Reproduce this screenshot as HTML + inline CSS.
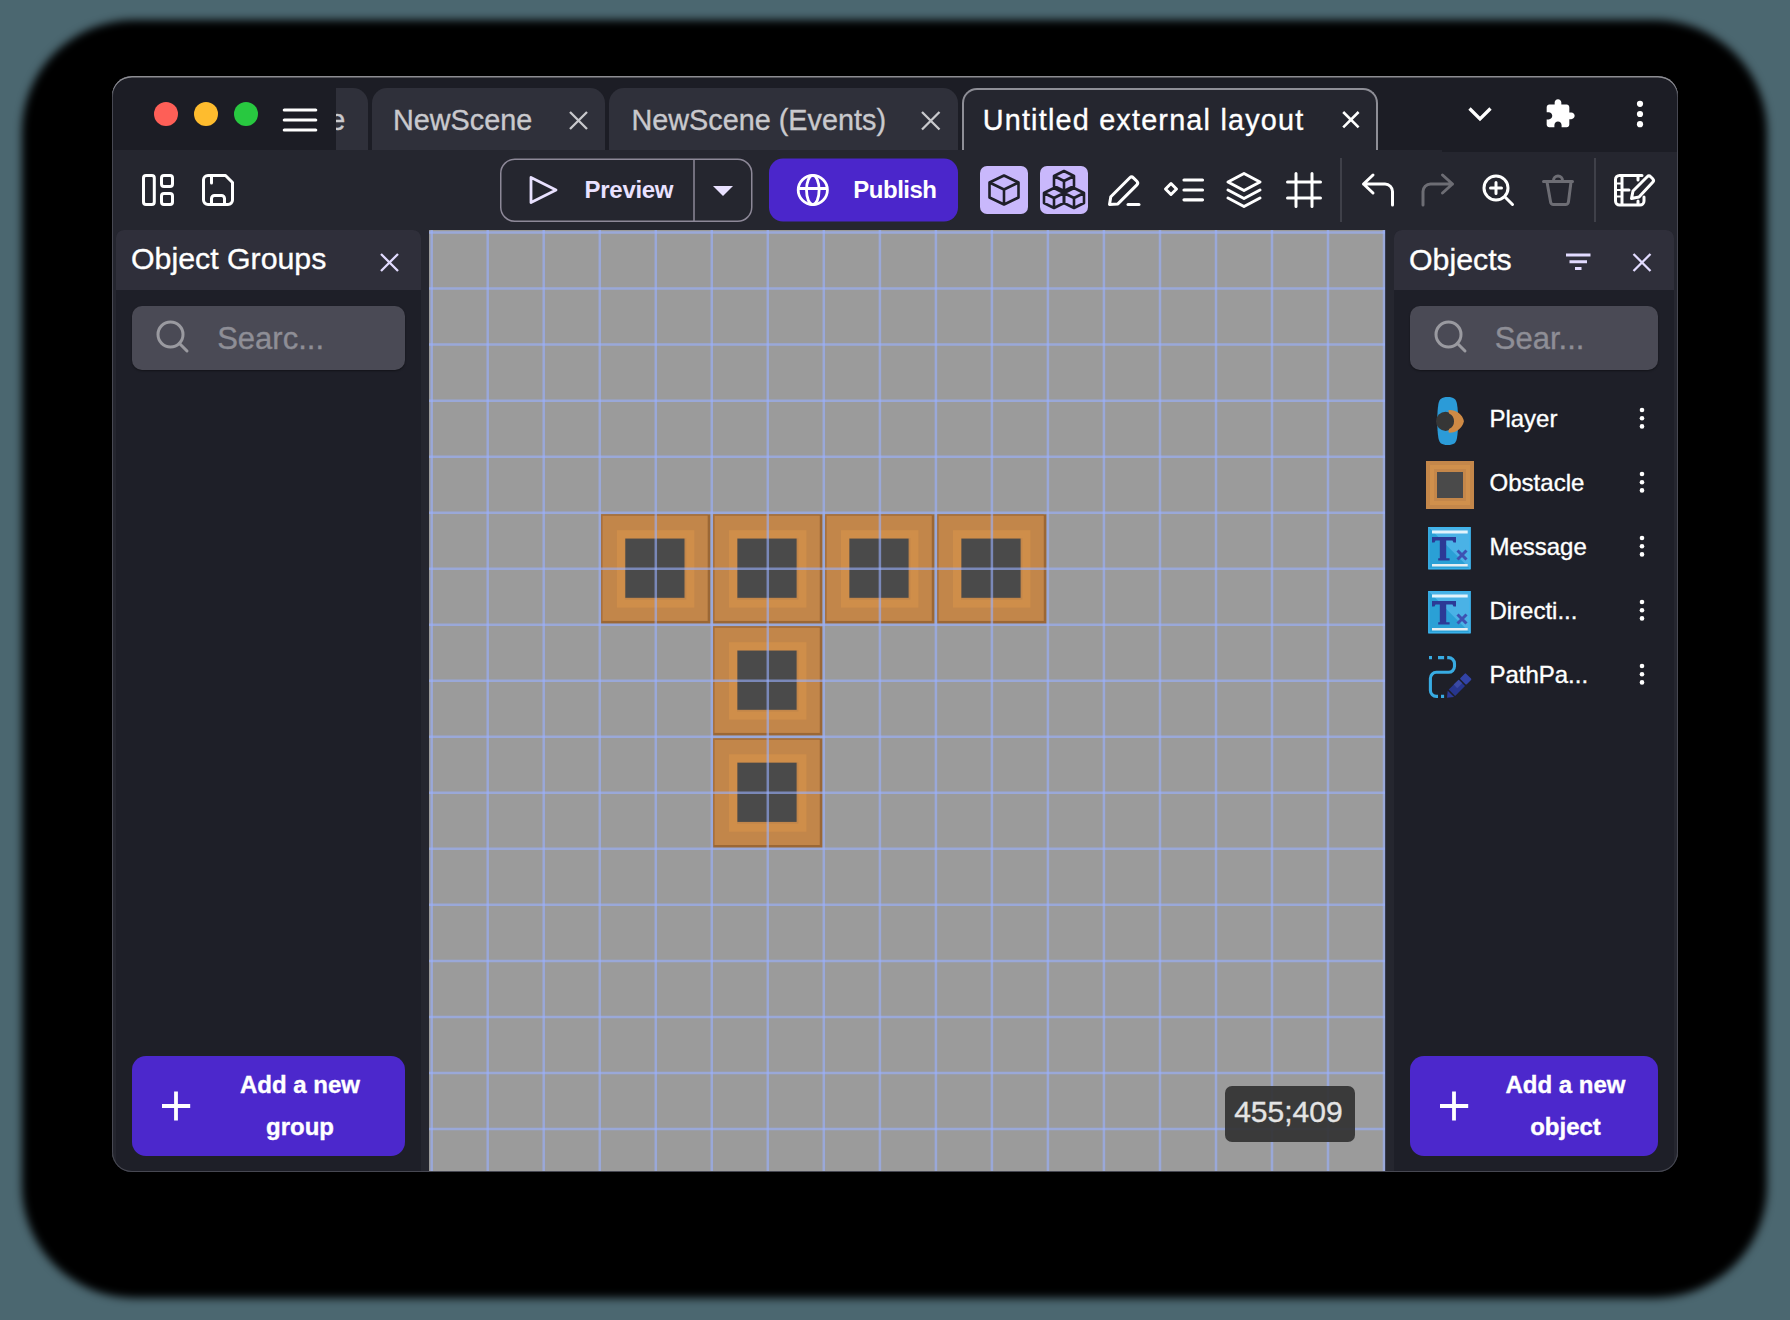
<!DOCTYPE html>
<html><head><meta charset="utf-8">
<style>
*{box-sizing:border-box;margin:0;padding:0}
html,body{width:1790px;height:1320px;overflow:hidden;background:#4b6770;font-family:"Liberation Sans",sans-serif}
.a{position:absolute}
#shadow{left:22px;top:20px;width:1745px;height:1278px;border-radius:112px;background:#000;filter:blur(4.5px)}
#win{left:112px;top:76px;width:1566px;height:1096px;border-radius:20px;background:#25262f;overflow:hidden}
#in{left:-112px;top:-76px;width:1790px;height:1320px}
#wb{left:112px;top:76px;width:1566px;height:1096px;border-radius:20px;box-shadow:inset 0 1.5px 0 #8d8d92, inset 0 0 0 1px #474852;pointer-events:none}
.t{position:absolute;white-space:nowrap;line-height:1;-webkit-text-stroke:0.35px currentColor}
svg{position:absolute;left:0;top:0;overflow:visible}
</style></head><body>
<div id="shadow" class="a"></div>
<div id="win" class="a"><div id="in" class="a">
  <!-- title/tab row -->
  <div class="a" style="left:112px;top:76px;width:1566px;height:76px;background:#1c1d25"></div>
  <!-- inactive tabs -->
  <div class="a" style="left:300px;top:88px;width:68px;height:62px;background:#2f303a;border-radius:0 15px 0 0;overflow:hidden"><div class="t" style="left:-94px;top:17.8px;font-size:28.8px;color:#c9c9cd">NewScene</div></div>
  <div class="a" style="left:112px;top:76px;width:224px;height:74px;background:#1c1d25"></div>
  <div class="a" style="left:372px;top:88px;width:233px;height:62px;background:#2f303a;border-radius:15px 15px 0 0"></div>
  <div class="a" style="left:609px;top:88px;width:349px;height:62px;background:#2f303a;border-radius:15px 15px 0 0"></div>
  <div class="a" style="left:962px;top:88px;width:416px;height:70px;background:#25262f;border-radius:15px 15px 0 0;border:2px solid #8e8e96;border-bottom:none"></div>
  <!-- toolbar -->
  <div class="a" style="left:112px;top:150px;width:1330px;height:80px;background:#25262f"></div><div class="a" style="left:1442px;top:152px;width:236px;height:78px;background:#25262f"></div>

  <div class="t" style="left:393px;top:105.8px;font-size:28.8px;color:#c9c9cd">NewScene</div>
  <div class="t" style="left:631.5px;top:105.8px;font-size:28.8px;color:#c9c9cd">NewScene (Events)</div>
  <div class="t" style="left:982.7px;top:105.8px;font-size:28.8px;color:#ffffff;letter-spacing:1.2px">Untitled external layout</div>

  <svg width="1790" height="1320">
    <!-- traffic lights -->
    <circle cx="166" cy="114" r="12" fill="#fe5f57"/>
    <circle cx="206" cy="114" r="12" fill="#febc2e"/>
    <circle cx="246" cy="114" r="12" fill="#28c840"/>
    <!-- hamburger -->
    <g stroke="#fff" stroke-width="3.2" stroke-linecap="round">
      <line x1="284.3" y1="110" x2="315.7" y2="110"/><line x1="284.3" y1="120" x2="315.7" y2="120"/><line x1="284.3" y1="130" x2="315.7" y2="130"/>
    </g>
    <!-- tab close x -->
    <g stroke="#c9c9cd" stroke-width="2.3" stroke-linecap="butt">
      <path d="M570 112 L587 129 M587 112 L570 129"/>
      <path d="M922 112 L939.5 129.5 M939.5 112 L922 129.5"/>
    </g>
    <path d="M1343.2 112 L1358.6 127.4 M1358.6 112 L1343.2 127.4" stroke="#fff" stroke-width="2.6"/>
    <!-- chevron -->
    <path d="M1469.5 108.5 L1480 119 L1490.5 108.5" fill="none" stroke="#fff" stroke-width="3.3" stroke-linecap="butt" stroke-linejoin="miter"/>
    <!-- puzzle -->
    <path transform="translate(1544,97.8) scale(1.333)" fill="#fff" d="M20.5 11H19V7c0-1.1-.9-2-2-2h-4V3.5C13 2.12 11.88 1 10.5 1S8 2.12 8 3.5V5H4c-1.1 0-1.99.9-1.99 2v3.8H3.5c1.49 0 2.7 1.21 2.7 2.7s-1.21 2.7-2.7 2.7H2V20c0 1.1.9 2 2 2h3.8v-1.5c0-1.49 1.21-2.7 2.7-2.7 1.49 0 2.7 1.21 2.7 2.7V22H17c1.1 0 2-.9 2-2v-4h1.5c1.38 0 2.5-1.12 2.5-2.5S21.88 11 20.5 11z"/>
    <!-- kebab top -->
    <g fill="#fff"><circle cx="1640" cy="103.8" r="3.1"/><circle cx="1640" cy="114" r="3.1"/><circle cx="1640" cy="124.2" r="3.1"/></g>

    <!-- toolbar icons -->
    <g fill="none" stroke="#fff" stroke-width="3" stroke-linecap="round" stroke-linejoin="round">
      <rect x="143.5" y="175.5" width="10.8" height="29" rx="2.5"/>
      <rect x="161.5" y="175.5" width="11" height="11" rx="2.5"/>
      <rect x="161.5" y="193.5" width="11" height="11" rx="2.5"/>
      <path d="M208 175.5 H225.5 L232.5 182.5 V200 a4.5 4.5 0 0 1 -4.5 4.5 H208 a4.5 4.5 0 0 1 -4.5 -4.5 V180 a4.5 4.5 0 0 1 4.5 -4.5 Z"/>
      <path d="M211.5 175.5 V183"/>
      <path d="M211.5 204.5 V198.5 a3 3 0 0 1 3 -3 H221.5 a3 3 0 0 1 3 3 V204.5"/>
    </g>
    <!-- preview button -->
    <rect x="500.75" y="159.25" width="251" height="62" rx="14" fill="none" stroke="#8d8898" stroke-width="1.5"/>
    <line x1="694" y1="159" x2="694" y2="221.5" stroke="#8d8898" stroke-width="1.5"/>
    <path d="M531 177.5 L556 190 L531 202.5 Z" fill="none" stroke="#e9e1ff" stroke-width="2.8" stroke-linejoin="round"/>
    <path d="M713 186 H733 L723 196 Z" fill="#e9e1ff"/>
    <!-- publish -->
    <rect x="769" y="158.6" width="189" height="63" rx="14" fill="#4b26cb"/>
    <g fill="none" stroke="#fff" stroke-width="2.8">
      <circle cx="812.8" cy="190" r="14.6"/>
      <ellipse cx="812.8" cy="190" rx="6.3" ry="14.6"/>
      <line x1="798.2" y1="188.5" x2="827.4" y2="188.5"/>
    </g>
    <!-- selected view buttons -->
    <rect x="980" y="166" width="48" height="48" rx="7" fill="#c9b8fc"/>
    <rect x="1040" y="166" width="48" height="48" rx="7" fill="#c9b8fc"/>
    <g fill="none" stroke="#1f1f29" stroke-width="2.6" stroke-linejoin="round">
      <path d="M1004 175.5 L1018.5 182.5 V197.5 L1004 204.5 L989.5 197.5 V182.5 Z M989.5 182.5 L1004 189.5 L1018.5 182.5 M1004 189.5 V204.5"/>
      <path d="M1064 171 L1074 176 V186 L1064 191 L1054 186 V176 Z M1054 176 L1064 181 L1074 176 M1064 181 V191"/>
      <path d="M1054 188 L1064 193 V203 L1054 208 L1044 203 V193 Z M1044 193 L1054 198 L1064 193 M1054 198 V208"/>
      <path d="M1074 188 L1084 193 V203 L1074 208 L1064 203 V193 Z M1064 193 L1074 198 L1084 193 M1074 198 V208"/>
    </g>
    <g fill="none" stroke="#fff" stroke-width="3" stroke-linecap="round" stroke-linejoin="round">
      <path d="M1109.5 204.5 L1110.8 196.8 L1129.8 177.8 a2.6 2.6 0 0 1 3.6 0 L1136.9 181.3 a2.6 2.6 0 0 1 0 3.6 L1117.9 203.9 Z"/>
      <path d="M1128 204.5 H1139"/>
      <path d="M1171 183.5 L1176.5 189 L1171 194.5 L1165.5 189 Z"/>
      <path d="M1184 180 H1202.5 M1184 190 H1202.5 M1184 199.8 H1202.5" stroke-width="3.2"/>
      <path d="M1244 173.5 L1260 182 L1244 190.5 L1228 182 Z M1228 190 L1244 198.5 L1260 190 M1228 198 L1244 206.5 L1260 198"/>
      <path d="M1296 173.5 V206.5 M1312 173.5 V206.5 M1287.5 182 H1320.5 M1287.5 198 H1320.5"/>
      <path d="M1373 175 L1363.5 184 L1373 193 M1363.5 184 H1385 a7.5 7.5 0 0 1 7.5 7.5 V205"/>
      <circle cx="1496" cy="188" r="12"/>
      <path d="M1505 197 L1512.5 204.5 M1496 182.5 V193.5 M1490.5 188 H1501.5"/>
      <path d="M1642 175.5 H1619.5 a4 4 0 0 0 -4 4 V201 a4 4 0 0 0 4 4 H1640 a4 4 0 0 0 4 -4 V197 M1622 175.5 V205 M1622 190 H1629 M1638 175.5 V180 M1638 201 V205"/><path d="M1616 183.5 H1622 M1616 190 H1622 M1616 196.5 H1622" stroke-width="2"/><path d="M1631.5 198.5 L1633 191 L1647.2 176.8 a2.5 2.5 0 0 1 3.5 0 L1652.7 178.8 a2.5 2.5 0 0 1 0 3.5 L1639 197 Z"/>
    </g>
    <g fill="none" stroke="#6d6d74" stroke-width="3" stroke-linecap="round" stroke-linejoin="round">
      <path d="M1442.5 175 L1452.5 184 L1442.5 193 M1452.5 184 H1430.5 a7.5 7.5 0 0 0 -7.5 7.5 V205"/>
      <path d="M1543.5 181.5 H1572.5 M1547 182 L1550.5 201.5 a3 3 0 0 0 3 3 H1565.5 a3 3 0 0 0 3 -3 L1571 182 M1553.5 181 V180.4 a4.5 4.5 0 0 1 9 0 V181"/>
    </g>
    <line x1="1341" y1="158" x2="1341" y2="222" stroke="#3f4049" stroke-width="2"/>
    <line x1="1595" y1="158" x2="1595" y2="222" stroke="#3f4049" stroke-width="2"/>
  </svg>
  <div class="t" style="left:584.6px;top:178px;font-size:24px;font-weight:bold;color:#e9e1ff;letter-spacing:-0.3px;-webkit-text-stroke:0">Preview</div>
  <div class="t" style="left:853.3px;top:178px;font-size:24px;font-weight:bold;color:#fff;letter-spacing:-0.5px;-webkit-text-stroke:0">Publish</div>

  <!-- left panel -->
  <div class="a" style="left:116px;top:230px;width:305px;height:960px;background:#1e1f28;border-radius:8px"></div>
  <div class="a" style="left:116px;top:230px;width:305px;height:60px;background:#2f2f3a;border-radius:8px 8px 0 0"></div>
  <div class="t" style="left:131px;top:244px;font-size:30.3px;color:#fff">Object Groups</div>
  <div class="a" style="left:132px;top:306px;width:273px;height:64px;background:#4a4a55;border-radius:10px;box-shadow:0 1px 2px rgba(0,0,0,.4)"></div>
  <div class="t" style="left:217.2px;top:323.1px;font-size:31px;color:#8e8e96">Searc...</div>
  <div class="a" style="left:132px;top:1056px;width:273px;height:100px;background:#4c28cc;border-radius:14px"></div>
  <div class="t" style="left:132px;width:336px;text-align:center;top:1072.5px;font-size:24px;font-weight:bold;color:#fff">Add a new</div>
  <div class="t" style="left:132px;width:336px;text-align:center;top:1114.8px;font-size:24px;font-weight:bold;color:#fff">group</div>

  <!-- canvas -->
  <div class="a" style="left:429px;top:230px;width:956px;height:942px;background:#9b9b9b"></div>
  <svg width="1790" height="1320" id="cv"><defs><g id="ob"><rect x="0" y="0" width="109.2" height="109.2" fill="#9b6735"/><rect x="0" y="0" width="106.5" height="106.5" fill="#a8703c"/><rect x="1.5" y="1.5" width="105" height="105" fill="#c2864a"/><rect x="19.8" y="19.8" width="69.4" height="69.4" fill="none" stroke="#cf8e4a" stroke-width="8"/><rect x="24.2" y="24.2" width="59.2" height="59.2" fill="#4a4a4a"/></g></defs><use href="#ob" x="601.1" y="514.4"/><use href="#ob" x="713.2" y="514.4"/><use href="#ob" x="825.2" y="514.4"/><use href="#ob" x="937.2" y="514.4"/><use href="#ob" x="713.2" y="626.4"/><use href="#ob" x="713.2" y="738.5"/><path d="M431.7 230V1172M487.7 230V1172M543.7 230V1172M599.8 230V1172M655.8 230V1172M711.8 230V1172M767.8 230V1172M823.8 230V1172M879.9 230V1172M935.9 230V1172M991.9 230V1172M1047.9 230V1172M1103.9 230V1172M1160.0 230V1172M1216.0 230V1172M1272.0 230V1172M1328.0 230V1172M1384.0 230V1172" stroke="rgba(154,177,255,0.61)" stroke-width="2.5" fill="none"/><path d="M429 232.6H1385M429 288.6H1385M429 344.6H1385M429 400.7H1385M429 456.7H1385M429 512.7H1385M429 568.7H1385M429 624.7H1385M429 680.8H1385M429 736.8H1385M429 792.8H1385M429 848.8H1385M429 904.8H1385M429 960.9H1385M429 1016.9H1385M429 1072.9H1385M429 1128.9H1385" stroke="rgba(154,177,255,0.61)" stroke-width="2.5" fill="none"/></svg>
  <div class="a" style="left:1225px;top:1086px;width:130px;height:56px;background:rgba(50,50,50,0.92);border-radius:7px"></div>
  <div class="t" style="left:1234.2px;top:1096.5px;font-size:30px;color:#e4e4e4">455;409</div>

  <!-- right panel -->
  <div class="a" style="left:1394px;top:230px;width:280px;height:960px;background:#1e1f28;border-radius:8px"></div>
  <div class="a" style="left:1394px;top:230px;width:280px;height:60px;background:#2f2f3a;border-radius:8px 8px 0 0"></div>
  <div class="t" style="left:1409px;top:244.5px;font-size:30.3px;color:#fff">Objects</div>
  <div class="a" style="left:1410px;top:306px;width:248px;height:64px;background:#4a4a55;border-radius:10px;box-shadow:0 1px 2px rgba(0,0,0,.4)"></div>
  <div class="t" style="left:1494.8px;top:323.1px;font-size:31px;color:#8e8e96">Sear...</div>
  <div class="t" style="left:1489.4px;top:407px;font-size:24px;color:#fff">Player</div>
  <div class="t" style="left:1489.6px;top:471.1px;font-size:24px;color:#fff">Obstacle</div>
  <div class="t" style="left:1489.4px;top:535.1px;font-size:24px;color:#fff">Message</div>
  <div class="t" style="left:1489.4px;top:599.1px;font-size:24px;color:#fff">Directi...</div>
  <div class="t" style="left:1489.4px;top:663.1px;font-size:24px;color:#fff">PathPa...</div>
  <div class="a" style="left:1410px;top:1056px;width:248px;height:100px;background:#4c28cc;border-radius:14px"></div>
  <div class="t" style="left:1410px;width:311px;text-align:center;top:1072.5px;font-size:24px;font-weight:bold;color:#fff">Add a new</div>
  <div class="t" style="left:1410px;width:311px;text-align:center;top:1114.8px;font-size:24px;font-weight:bold;color:#fff">object</div>

  <svg width="1790" height="1320" id="sv2">
    <!-- panel icons -->
    <path d="M381 254 L398 271 M398 254 L381 271" stroke="#e2dbff" stroke-width="2.3"/>
    <path d="M1633.5 254 L1650.5 271 M1650.5 254 L1633.5 271" stroke="#e2dbff" stroke-width="2.3"/>
    <g stroke="#e2dbff" stroke-width="3"><path d="M1566 255 H1590.5 M1569.5 261.8 H1587 M1575 268.5 H1581.5"/></g>
    <g fill="none" stroke="#9a9aa0" stroke-width="3" stroke-linecap="round">
      <circle cx="170.5" cy="334.5" r="12.5"/><path d="M179.5 343.5 L187 351"/>
      <circle cx="1448.5" cy="334.5" r="12.5"/><path d="M1457.5 343.5 L1465 351"/>
    </g>
    <!-- plus icons -->
    <g stroke="#fff" stroke-width="3.8"><path d="M176 1091.5 V1120.5 M162 1106 H190.2"/><path d="M1454 1091.5 V1120.5 M1440 1106 H1468.2"/></g>
    <!-- kebabs -->
    <g fill="#fff">
      <circle cx="1642" cy="410" r="2.3"/><circle cx="1642" cy="418.2" r="2.3"/><circle cx="1642" cy="426.4" r="2.3"/>
      <circle cx="1642" cy="474" r="2.3"/><circle cx="1642" cy="482.2" r="2.3"/><circle cx="1642" cy="490.4" r="2.3"/>
      <circle cx="1642" cy="538" r="2.3"/><circle cx="1642" cy="546.2" r="2.3"/><circle cx="1642" cy="554.4" r="2.3"/>
      <circle cx="1642" cy="602" r="2.3"/><circle cx="1642" cy="610.2" r="2.3"/><circle cx="1642" cy="618.4" r="2.3"/>
      <circle cx="1642" cy="666" r="2.3"/><circle cx="1642" cy="674.2" r="2.3"/><circle cx="1642" cy="682.4" r="2.3"/>
    </g>
    <!-- player icon -->
    <path d="M1447.7 397 C1454 397 1456 399 1457 404 C1458.5 412 1458.5 430 1457 438 C1456 443 1454 445 1447.7 445 C1441.4 445 1439.4 443 1438.4 438 C1436.9 430 1436.9 412 1438.4 404 C1439.4 399 1441.4 397 1447.7 397 Z" fill="#2b9bd8"/>
    <circle cx="1445.6" cy="421.3" r="9.6" fill="#363636"/>
    <path d="M1449.5 411 C1456 411 1461.5 415.5 1462.8 421.3 C1461.5 427.1 1456 431.6 1449.5 431.6 L1450 429.8 A9.6 9.6 0 0 0 1450 412.8 Z" fill="#cf8a45" stroke="#cf8a45" stroke-width="2.2" stroke-linejoin="round"/>
    <!-- obstacle icon -->
    <rect x="1426" y="461" width="48" height="48" fill="#c4874a"/>
    <rect x="1432" y="467" width="36" height="36" fill="none" stroke="#d0904c" stroke-width="4"/>
    <rect x="1437" y="472" width="26" height="26" fill="#4a4a4a"/>
    <!-- Tx icons -->
    <g id="tx">
      <rect x="1428.3" y="527.1" width="42.2" height="42.2" fill="#2aa0d6"/>
      <path d="M1428.3 527.1 H1470.5 V569.3 Z" fill="#4ab2e6"/>
      <rect x="1428.8" y="527.6" width="41.2" height="41.2" fill="none" stroke="#3db5ee" stroke-width="1.2"/>
      <path d="M1432 532 H1467.7" stroke="#e2f3fc" stroke-width="2.8"/>
      <path d="M1432 565.3 H1467.7" stroke="#e6eef2" stroke-width="2.5"/>
      <path d="M1432 537 H1456 V542.5 H1453.5 L1452.5 540.5 H1446.2 V558.2 H1449.6 V560.6 H1438.2 V558.2 H1439.8 V540.5 H1435.5 L1434.5 542.5 H1432 Z" fill="#2c3a96"/>
      <path d="M1457.5 550.5 L1466.5 559.5 M1466.5 550.5 L1457.5 559.5" stroke="#3d52b2" stroke-width="3"/>
    </g>
    <use href="#tx" y="64"/>
    <!-- path painter icon -->
    <g fill="none" stroke="#38abe2" stroke-width="3.1">
      <path d="M1429 657.6 H1432 M1438 657.6 H1444.1"/>
      <path d="M1447.2 657.6 H1448.5 a6 6 0 0 1 6 6 V666.3 a6 6 0 0 1 -6 6 H1436.4 a6 6 0 0 0 -6 6 V690.4 a6 6 0 0 0 6 6 H1438 M1441 696.4 H1444.1"/>
    </g>
    <g transform="translate(1447,697.7) rotate(-45)">
      <path d="M0 0 L5.5 -4.5 V4.5 Z" fill="#2b3a98"/>
      <rect x="7" y="-4.5" width="14" height="9" fill="#27368f"/>
      <rect x="14" y="-4.5" width="7" height="5" fill="#3a49a4"/>
      <rect x="22.5" y="-4.5" width="8" height="9" rx="1" fill="#3243a6"/>
    </g>
  </svg>
</div></div>
<div id="wb" class="a"></div>
</body></html>
